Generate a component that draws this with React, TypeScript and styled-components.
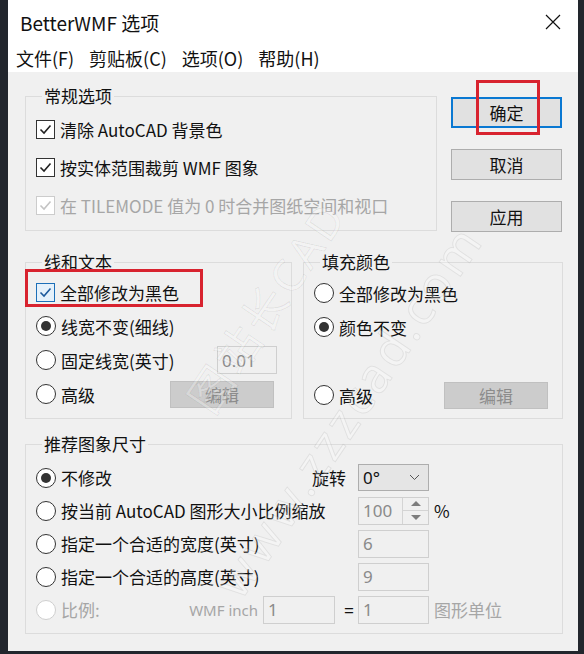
import React from "react";
import styled, { createGlobalStyle } from "styled-components";

const GlobalStyle = createGlobalStyle`
  html, body {
    margin: 0;
    padding: 0;
    background: #22262d;
  }
  body {
    font-family: "Noto Sans CJK SC", "Noto Sans", sans-serif;
  }
`;

const Dialog = styled.div`
  position: relative;
  margin-left: 8px;
  width: 570px;
  height: 651px;
  background: #f0f0f0;
  overflow: hidden;
  color: #111;
`;

const TitleBar = styled.div`
  height: 44px;
  display: flex;
  align-items: center;
  justify-content: space-between;
  padding: 0 17px 0 12px;
  background: #fff;
  font-size: 19px;
`;

const MenuBar = styled.div`
  height: 28px;
  display: flex;
  align-items: center;
  gap: 15px;
  padding-left: 8px;
  background: #fff;
  font-size: 18px;
`;

const Body = styled.div`
  display: flex;
  flex-direction: column;
  padding: 12px 15px 0 17px;
`;

const TopRow = styled.div`
  display: flex;
  align-items: flex-start;
  gap: 14px;
`;

const MidRow = styled.div<{ $mt?: number }>`
  display: flex;
  gap: 11px;
  margin-top: ${(p) => p.$mt ?? 18}px;
`;

const Group = styled.fieldset<{ $w?: number; $h: number; $pt?: number }>`
  box-sizing: border-box;
  margin: 0;
  width: ${(p) => (p.$w ? `${p.$w}px` : "auto")};
  height: ${(p) => p.$h}px;
  padding: ${(p) => p.$pt ?? 2}px 14px 0 10px;
  border: 1px solid #dcdcdc;
  min-width: 0;
`;

const Legend = styled.legend`
  margin-left: 6px;
  padding: 0 2px;
  font-size: 17px;
  line-height: 24px;
  color: #111;
`;

const Row = styled.div<{ $h: number }>`
  position: relative;
  display: flex;
  align-items: center;
  justify-content: space-between;
  height: ${(p) => p.$h}px;
`;

const Item = styled.label<{ $disabled?: boolean }>`
  display: flex;
  align-items: center;
  gap: 5px;
  font-size: 17px;
  white-space: nowrap;
  color: ${(p) => (p.$disabled ? "#a6a6a6" : "#111")};
`;

const Box = styled.span<{ $state: "on" | "hover" | "disabled" }>`
  box-sizing: border-box;
  width: 19px;
  height: 19px;
  display: flex;
  align-items: center;
  justify-content: center;
  background: ${(p) => (p.$state === "hover" ? "#e5f1fb" : "#fff")};
  border: 1px solid
    ${(p) =>
      p.$state === "hover" ? "#1c6fb8" : p.$state === "disabled" ? "#cccccc" : "#333"};
  color: ${(p) =>
    p.$state === "hover" ? "#1d5a9c" : p.$state === "disabled" ? "#c4c4c4" : "#222"};
`;

const Radio = styled.span<{ $on?: boolean; $disabled?: boolean }>`
  box-sizing: border-box;
  width: 20px;
  height: 20px;
  border-radius: 50%;
  display: flex;
  align-items: center;
  justify-content: center;
  background: #fff;
  border: 1px solid ${(p) => (p.$disabled ? "#cfcfcf" : "#333")};
  &::after {
    content: "";
    display: ${(p) => (p.$on ? "block" : "none")};
    width: 10px;
    height: 10px;
    border-radius: 50%;
    background: #333;
  }
`;

const ButtonCol = styled.div`
  display: flex;
  flex-direction: column;
  gap: 21px;
  padding-top: 13px;
`;

const ButtonWrap = styled.div`
  position: relative;
`;

const Button = styled.div<{ $primary?: boolean }>`
  box-sizing: border-box;
  width: 111px;
  height: 31px;
  display: flex;
  align-items: center;
  justify-content: center;
  font-size: 17px;
  background: #e1e1e1;
  border: ${(p) => (p.$primary ? "2px solid #0a78d2" : "1px solid #adadad")};
`;

const Highlight = styled.div<{ $l: number; $t: number; $w: number; $h: number }>`
  position: absolute;
  left: ${(p) => p.$l}px;
  top: ${(p) => p.$t}px;
  width: ${(p) => p.$w}px;
  height: ${(p) => p.$h}px;
  box-sizing: border-box;
  border: 3px solid #d8232f;
  pointer-events: none;
`;

const FlatButton = styled.div<{ $mr?: number }>`
  box-sizing: border-box;
  width: 104px;
  height: 27px;
  margin-right: ${(p) => p.$mr ?? 0}px;
  display: flex;
  align-items: center;
  justify-content: center;
  background: #cccccc;
  border: 1px solid #c0c0c0;
  color: #8c8c8c;
  font-size: 17px;
`;

const Field = styled.div<{ $w?: number }>`
  box-sizing: border-box;
  width: ${(p) => p.$w ?? 71}px;
  height: 28px;
  display: flex;
  align-items: center;
  padding-left: 4px;
  background: #f0f0f0;
  border: 1px solid #cfcfcf;
  color: #8a8a8a;
  font-size: 17px;
  font-family: "Noto Sans", "Noto Sans CJK SC", sans-serif;
`;

const SpinField = styled(Field)`
  position: relative;
  padding-right: 0;
  justify-content: space-between;
`;

const Spin = styled.div`
  width: 25px;
  height: 100%;
  display: flex;
  flex-direction: column;
  border-left: 1px solid #d4d4d4;
`;

const SpinHalf = styled.div<{ $down?: boolean }>`
  flex: 1;
  display: flex;
  align-items: center;
  justify-content: center;
  border-top: ${(p) => (p.$down ? "1px solid #d4d4d4" : "none")};
  &::after {
    content: "";
    border-left: 5px solid transparent;
    border-right: 5px solid transparent;
    ${(p) =>
      p.$down ? "border-top: 5px solid #7d7d7d;" : "border-bottom: 5px solid #7d7d7d;"}
  }
`;

const Select = styled.div`
  box-sizing: border-box;
  width: 71px;
  height: 27px;
  display: flex;
  align-items: center;
  justify-content: space-between;
  padding: 0 8px 0 4px;
  background: #e5e5e5;
  border: 1px solid #adadad;
  font-size: 17px;
  font-family: "Noto Sans", "Noto Sans CJK SC", sans-serif;
`;

const SizeRow = styled.div`
  display: grid;
  grid-template-columns: 322px 71px auto;
  align-items: center;
  height: 33px;
`;

const LeftCell = styled.div`
  display: flex;
  align-items: center;
  justify-content: space-between;
`;

const Side = styled.span<{ $gray?: boolean; $pr?: number }>`
  display: flex;
  align-items: center;
  gap: 5px;
  padding-right: ${(p) => p.$pr ?? 0}px;
  font-size: 17px;
  color: ${(p) => (p.$gray ? "#a6a6a6" : "#111")};
`;

const Latin = styled.span`
  font-family: "Noto Sans", sans-serif;
  font-size: 15px;
`;

const Equals = styled.span`
  width: 18px;
  text-align: center;
  font-size: 17px;
  color: #111;
`;

const Suffix = styled.span<{ $gray?: boolean }>`
  margin-left: 5px;
  font-size: 17px;
  color: ${(p) => (p.$gray ? "#a6a6a6" : "#111")};
`;

const Watermark = styled.div<{ $x: number; $y: number; $size: number }>`
  position: absolute;
  left: ${(p) => p.$x}px;
  top: ${(p) => p.$y}px;
  transform: translate(-50%, -50%) rotate(-56deg);
  font-family: "Noto Sans", "Noto Sans CJK SC", sans-serif;
  font-size: ${(p) => p.$size}px;
  letter-spacing: 4px;
  white-space: nowrap;
  color: rgba(255, 255, 255, 0.25);
  -webkit-text-stroke: 1px rgba(0, 0, 0, 0.07);
  pointer-events: none;
`;

function Check({
  state = "on",
  children,
}: {
  state?: "on" | "hover" | "disabled";
  children: React.ReactNode;
}) {
  return (
    <Item $disabled={state === "disabled"}>
      <Box $state={state}>
        <svg width="15" height="15" viewBox="0 0 15 15">
          <polyline
            points="2.5,7.5 6,11 12.5,3.5"
            fill="none"
            stroke="currentColor"
            strokeWidth="1.6"
          />
        </svg>
      </Box>
      {children}
    </Item>
  );
}

function Opt({
  on,
  disabled,
  children,
}: {
  on?: boolean;
  disabled?: boolean;
  children: React.ReactNode;
}) {
  return (
    <Item $disabled={disabled}>
      <Radio $on={on} $disabled={disabled} />
      {children}
    </Item>
  );
}

export default function App() {
  return (
    <>
      <GlobalStyle />
      <Dialog>
        <TitleBar>
          <span>BetterWMF 选项</span>
          <svg width="16" height="16" viewBox="0 0 16 16">
            <path d="M1 1 L15 15 M15 1 L1 15" stroke="#111" strokeWidth="1.2" />
          </svg>
        </TitleBar>
        <MenuBar>
          <span>文件(F)</span>
          <span>剪贴板(C)</span>
          <span>选项(O)</span>
          <span>帮助(H)</span>
        </MenuBar>
        <Body>
          <TopRow>
            <Group $w={412} $h={147}>
              <Legend>常规选项</Legend>
              <Row $h={38}>
                <Check>清除 AutoCAD 背景色</Check>
              </Row>
              <Row $h={38}>
                <Check>按实体范围裁剪 WMF 图象</Check>
              </Row>
              <Row $h={38}>
                <Check state="disabled">在 TILEMODE 值为 0 时合并图纸空间和视口</Check>
              </Row>
            </Group>
            <ButtonCol>
              <ButtonWrap>
                <Button $primary>确定</Button>
                <Highlight $l={25} $t={-17} $w={64} $h={55} />
              </ButtonWrap>
              <Button>取消</Button>
              <Button>应用</Button>
            </ButtonCol>
          </TopRow>

          <MidRow>
            <Group $w={267} $h={169}>
              <Legend>线和文本</Legend>
              <Row $h={33}>
                <Check state="hover">全部修改为黑色</Check>
                <Highlight $l={-11} $t={-7} $w={178} $h={38} />
              </Row>
              <Row $h={34}>
                <Opt on>线宽不变(细线)</Opt>
              </Row>
              <Row $h={34}>
                <Opt>固定线宽(英寸)</Opt>
                <Field $w={60}>0.01</Field>
              </Row>
              <Row $h={34}>
                <Opt>高级</Opt>
                <FlatButton $mr={3}>编辑</FlatButton>
              </Row>
            </Group>
            <Group $w={260} $h={169}>
              <Legend>填充颜色</Legend>
              <Row $h={34}>
                <Opt>全部修改为黑色</Opt>
              </Row>
              <Row $h={34}>
                <Opt on>颜色不变</Opt>
              </Row>
              <Row $h={34} />
              <Row $h={34}>
                <Opt>高级</Opt>
                <FlatButton>编辑</FlatButton>
              </Row>
            </Group>
          </MidRow>

          <MidRow $mt={13}>
            <Group $w={538} $h={202} $pt={5}>
              <Legend>推荐图象尺寸</Legend>
              <SizeRow>
                <LeftCell>
                  <Opt on>不修改</Opt>
                  <Side $pr={12}>旋转</Side>
                </LeftCell>
                <Select>
                  <span>0°</span>
                  <svg width="11" height="7" viewBox="0 0 11 7">
                    <polyline points="1,1 5.5,5.5 10,1" fill="none" stroke="#555" strokeWidth="1" />
                  </svg>
                </Select>
              </SizeRow>
              <SizeRow>
                <Opt>按当前 AutoCAD 图形大小比例缩放</Opt>
                <SpinField>
                  <span>100</span>
                  <Spin>
                    <SpinHalf />
                    <SpinHalf $down />
                  </Spin>
                </SpinField>
                <Suffix>%</Suffix>
              </SizeRow>
              <SizeRow>
                <Opt>指定一个合适的宽度(英寸)</Opt>
                <Field>6</Field>
              </SizeRow>
              <SizeRow>
                <Opt>指定一个合适的高度(英寸)</Opt>
                <Field>9</Field>
              </SizeRow>
              <SizeRow>
                <LeftCell>
                  <Opt disabled>比例:</Opt>
                  <Side $gray>
                    <Latin>WMF inch</Latin>
                    <Field $w={72}>1</Field>
                    <Equals>=</Equals>
                  </Side>
                </LeftCell>
                <Field>1</Field>
                <Suffix $gray>图形单位</Suffix>
              </SizeRow>
            </Group>
          </MidRow>
        </Body>
        <Watermark $x={257} $y={305} $size={44}>
          图站长CAD
        </Watermark>
        <Watermark $x={340} $y={410} $size={48}>
          www.zzzcad.com
        </Watermark>
      </Dialog>
    </>
  );
}
